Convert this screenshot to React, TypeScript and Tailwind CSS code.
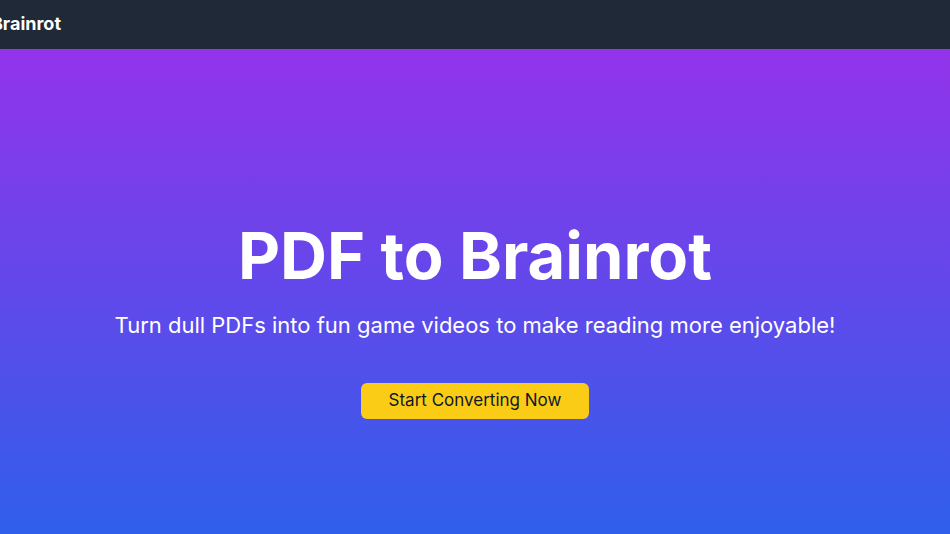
import React, { FC } from "react";

const Header: FC = () => {
  return (
    <header className="overflow-hidden border-b border-[#1f2937] bg-[#1f2937]">
      <nav className="-ml-20 flex h-12 items-center">
        <a
          href="#home"
          className="w-[141px] text-right text-lg font-bold whitespace-nowrap text-white"
        >
          PDF to Brainrot
        </a>
      </nav>
    </header>
  );
};

const Hero: FC = () => {
  return (
    <main className="flex flex-1 flex-col items-center justify-center bg-linear-to-b/srgb from-[#9333ea] to-[#2563eb] to-110% px-4 pt-14 text-center text-white">
      <h1 className="text-[65px] leading-[72px] font-bold">PDF to Brainrot</h1>
      <p className="mt-[17px] text-[22px] leading-8">
        Turn dull PDFs into fun game videos to make reading more enjoyable!
      </p>
      <button
        type="button"
        className="mt-[42px] h-9 rounded-md bg-[#facc15] px-7 text-[17px] text-gray-900"
      >
        Start Converting Now
      </button>
    </main>
  );
};

const App: FC = () => {
  return (
    <div className="flex min-h-screen flex-col font-['Inter',sans-serif]">
      <Header />
      <Hero />
    </div>
  );
};

export default App;
